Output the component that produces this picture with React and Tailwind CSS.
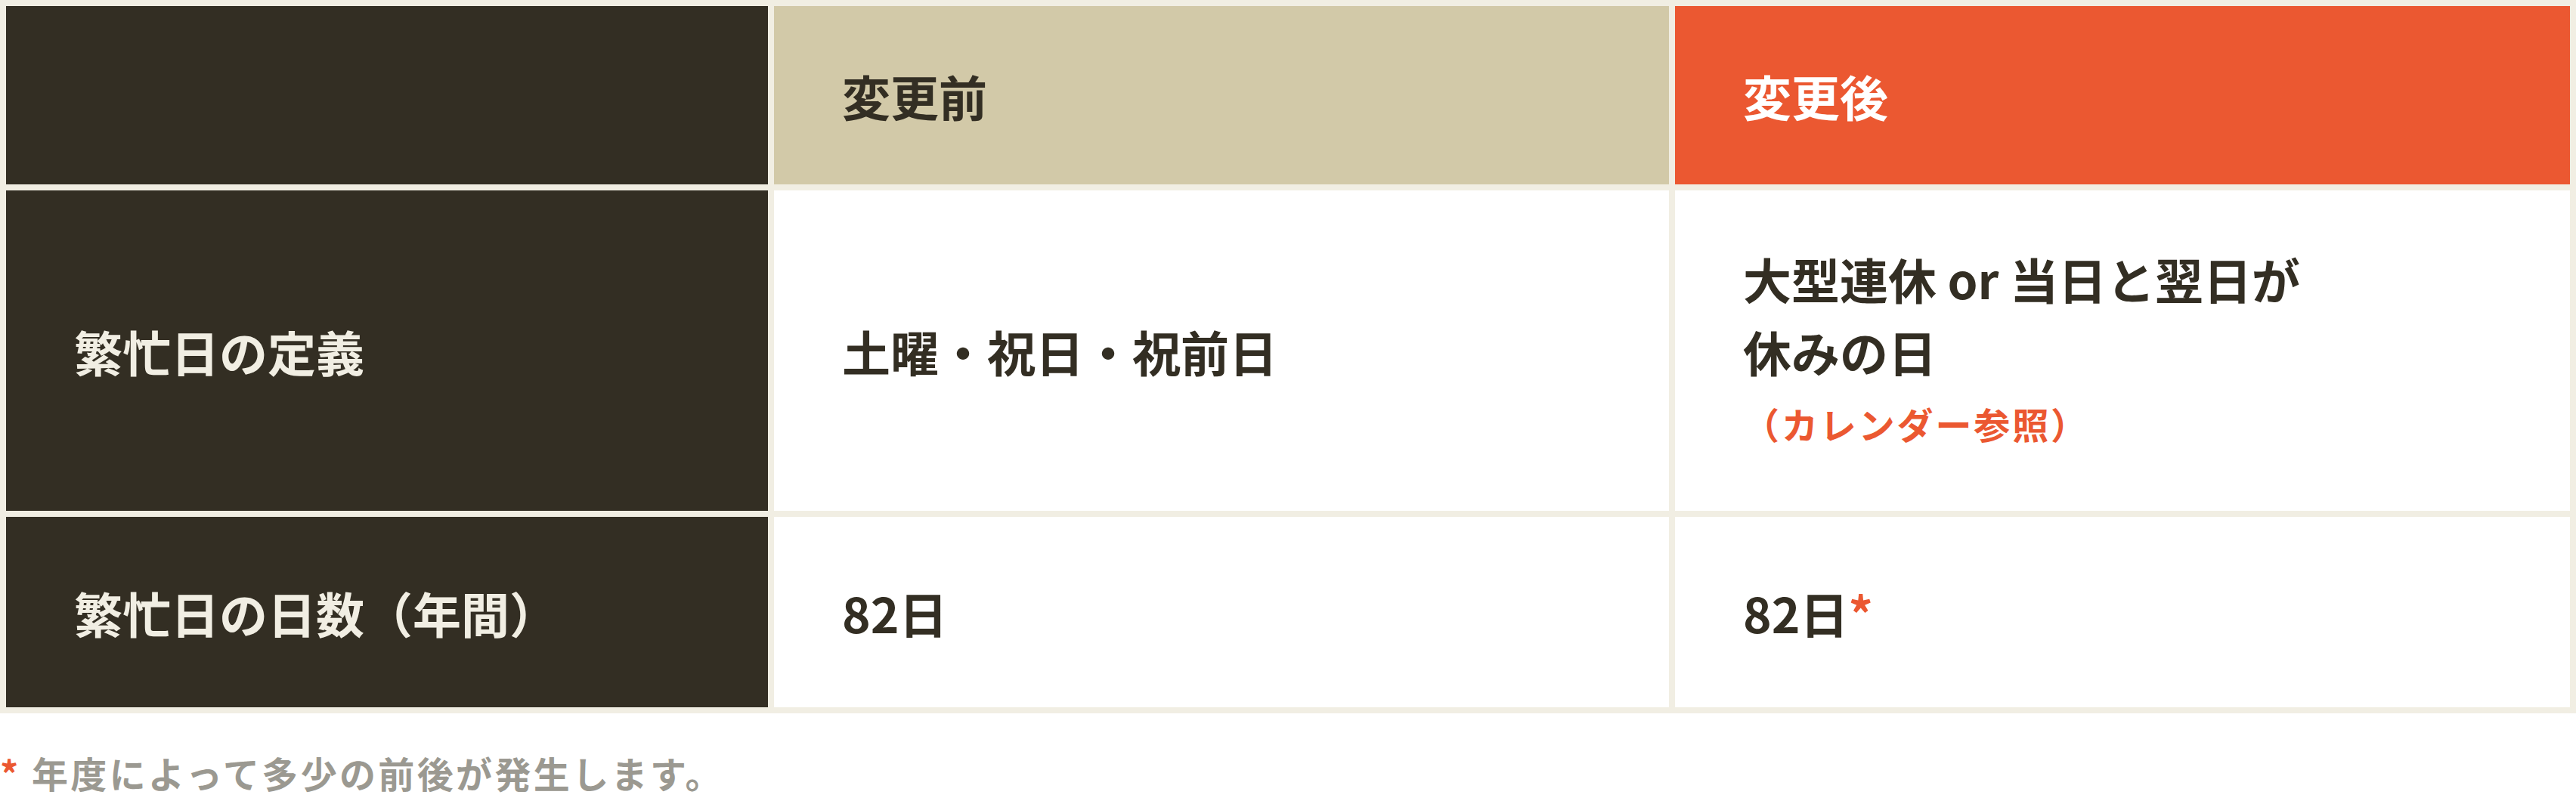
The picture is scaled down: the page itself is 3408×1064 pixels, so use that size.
const font = { fontFamily: '"Noto Sans CJK JP", "Noto Sans", sans-serif' };

function Cell({ className = '', children }) {
  return (
    <div className={`flex items-center pl-[90px] pr-[40px] ${className}`}>
      <div>{children}</div>
    </div>
  );
}

export default function App() {
  return (
    <div className="min-h-screen w-full bg-white" style={font}>
      <div className="grid grid-cols-[1008px_1184px_1184px] grid-rows-[236px_424px_252px] gap-[8px] p-[8px] bg-[#f1eee3] text-[64px] leading-[96px] font-bold">
        <Cell className="bg-[#332e23]" />
        <Cell className="bg-[#d2c9a8] text-[#332e23]">変更前</Cell>
        <Cell className="bg-[#eb5831] text-white">変更後</Cell>

        <Cell className="bg-[#332e23] text-[#f1eee3]">繁忙日の定義</Cell>
        <Cell className="bg-white text-[#332e23]">土曜・祝日・祝前日</Cell>
        <Cell className="bg-white text-[#332e23]">
          <p>大型連休 or 当日と翌日が</p>
          <p>休みの日</p>
          <p className="text-[48px] tracking-[0.06em] text-[#eb5831]">（カレンダー参照）</p>
        </Cell>

        <Cell className="bg-[#332e23] text-[#f1eee3]">繁忙日の日数（年間）</Cell>
        <Cell className="bg-white text-[#332e23]">82日</Cell>
        <Cell className="bg-white text-[#332e23]">
          82日<span className="text-[#eb5831]">*</span>
        </Cell>
      </div>

      <p className="mt-[42px] text-[48px] leading-[72px] font-bold tracking-[0.07em] text-[#9b9991]">
        <span className="text-[#eb5831]">*</span> 年度によって多少の前後が発生します。
      </p>
    </div>
  );
}
